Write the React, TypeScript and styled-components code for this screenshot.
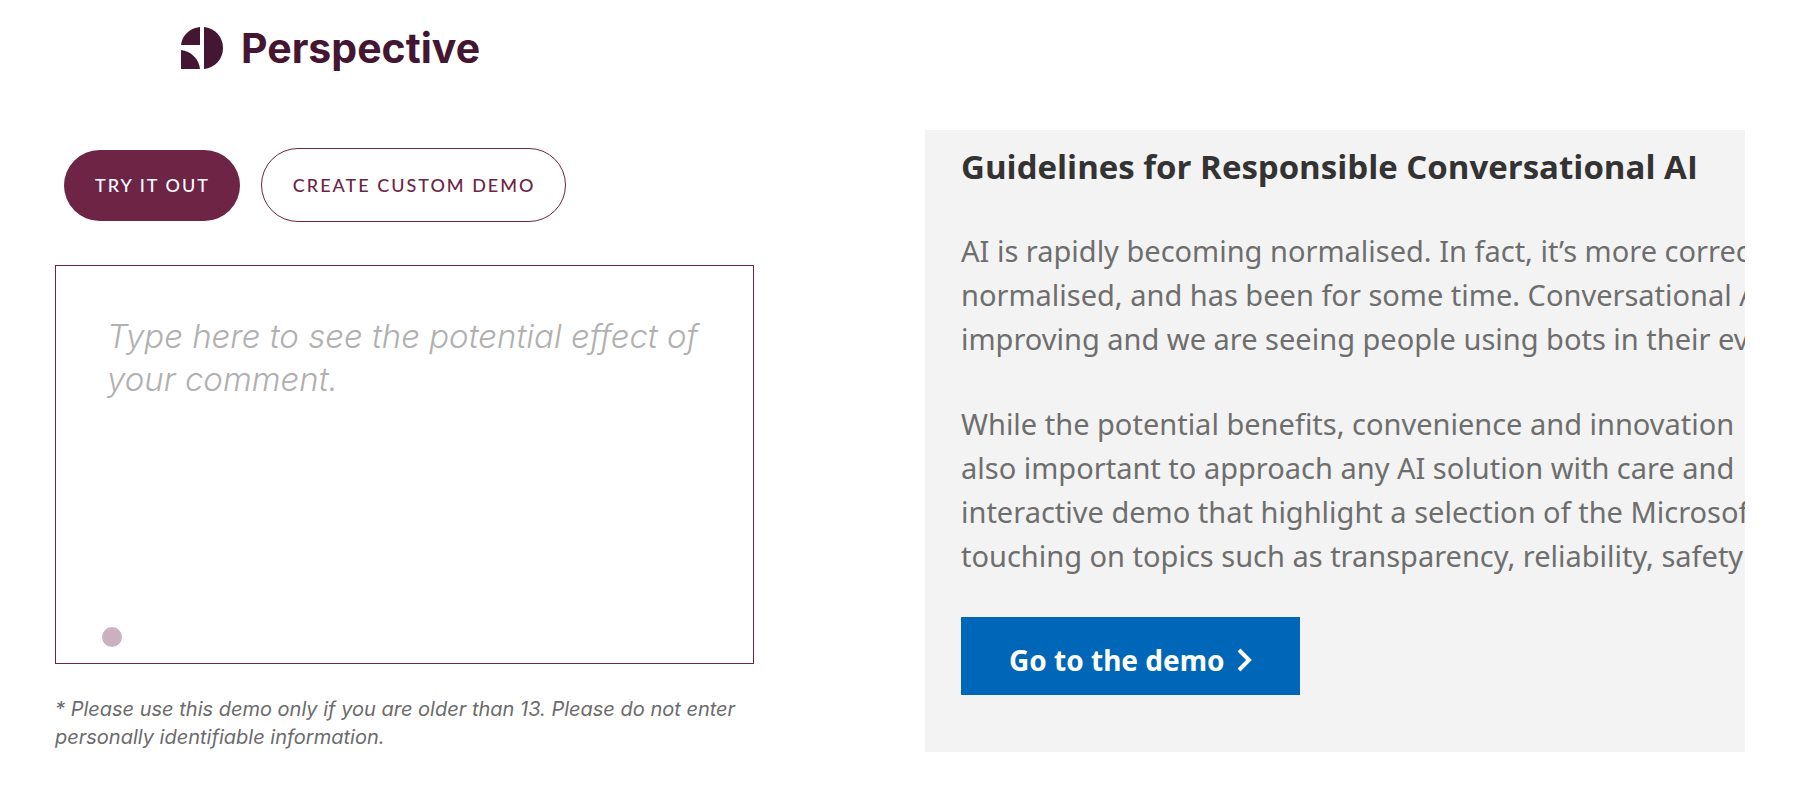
import React from "react";
import styled, { createGlobalStyle } from "styled-components";

const GlobalStyle = createGlobalStyle`
  *, *::before, *::after {
    box-sizing: border-box;
  }
  body {
    margin: 0;
    background: #ffffff;
  }
`;

const plum = "#6d2445";
const darkPlum = "#451632";

const Page = styled.main`
  display: grid;
  grid-template-columns: 699fr 820fr;
  column-gap: 171px;
  align-items: start;
  padding: 20px 63px 56px 55px;
`;

const DemoColumn = styled.section`
  min-width: 0;
`;

const Brand = styled.div`
  display: flex;
  align-items: center;
  gap: 18px;
  height: 56px;
  padding-left: 126px;
`;

const BrandMark = styled.svg`
  display: block;
  width: 42px;
  height: 42px;
  fill: ${darkPlum};
`;

const BrandName = styled.span`
  font: 700 41px/56px Inter, sans-serif;
  color: ${darkPlum};
`;

const Actions = styled.div`
  display: flex;
  align-items: center;
  gap: 21px;
  margin-top: 72px;
  padding-left: 9px;
`;

const PillButton = styled.button<{ $filled?: boolean }>`
  height: ${(p) => (p.$filled ? 71 : 74)}px;
  padding: 0 30px 0 31px;
  border: ${(p) => (p.$filled ? "none" : `1px solid ${plum}`)};
  border-radius: 37px;
  background: ${(p) => (p.$filled ? plum : "transparent")};
  color: ${(p) => (p.$filled ? "#ffffff" : plum)};
  font: 500 18px/24px Lato, sans-serif;
  letter-spacing: 2px;
  white-space: nowrap;
  cursor: pointer;
`;

const CommentBox = styled.div`
  display: flex;
  flex-direction: column;
  margin-top: 43px;
  height: 399px;
  padding: 49px 40px 16px 46px;
  border: 1px solid ${plum};
`;

const CommentInput = styled.textarea`
  flex: 1;
  width: 100%;
  padding: 0 0 0 5px;
  border: none;
  outline: none;
  resize: none;
  background: transparent;
  color: #333333;
  font: italic 300 33px/43px Inter, sans-serif;

  &::placeholder {
    color: #b0b0b0;
    opacity: 1;
  }
`;

const StatusDot = styled.span`
  width: 20px;
  height: 20px;
  border-radius: 50%;
  background: #cbb0c0;
`;

const Disclaimer = styled.p`
  margin: 31px 0 0;
  color: #6b6b6b;
  font: italic 400 20px/28px Inter, sans-serif;
`;

const Panel = styled.article`
  min-width: 0;
  margin-top: 110px;
  padding: 16px 0 57px 36px;
  overflow: hidden;
  background: #f3f3f3;
  font-family: "Noto Sans", sans-serif;
`;

const PanelTitle = styled.h2`
  margin: 0;
  color: #333333;
  font: 700 33px/42px "Open Sans", sans-serif;
  white-space: nowrap;
`;

const Paragraph = styled.p<{ $gap: number }>`
  margin: ${(p) => p.$gap}px 0 0;
  color: #6e6e6e;
  font-size: 29px;
  line-height: 44px;
  white-space: nowrap;
`;

const DemoLink = styled.a`
  display: inline-flex;
  align-items: center;
  gap: 12px;
  height: 78px;
  margin-top: 39px;
  padding: 8px 48px 0;
  background: #0067b8;
  color: #ffffff;
  font-size: 28px;
  font-weight: 700;
  line-height: 40px;
  text-decoration: none;
`;

const Chevron = styled.svg`
  width: 15px;
  height: 24px;
  fill: none;
  stroke: currentColor;
  stroke-width: 4;
`;

export default function App() {
  return (
    <>
      <GlobalStyle />
      <Page>
        <DemoColumn>
          <Brand>
            <BrandMark viewBox="0 0 42 42" aria-hidden="true">
              <path d="M19 0V18H0C1 8 9 1 19 0Z" />
              <path d="M23 0C34 1 42 10 42 21S34 41 23 42Z" />
              <path d="M0 23C10 24 18 32 19 42H0Z" />
            </BrandMark>
            <BrandName>Perspective</BrandName>
          </Brand>
          <Actions>
            <PillButton type="button" $filled>TRY IT OUT</PillButton>
            <PillButton type="button">CREATE CUSTOM DEMO</PillButton>
          </Actions>
          <CommentBox>
            <CommentInput
              aria-label="Comment"
              placeholder="Type here to see the potential effect of your comment."
            />
            <StatusDot />
          </CommentBox>
          <Disclaimer>
            * Please use this demo only if you are older than 13. Please do not enter personally
            identifiable information.
          </Disclaimer>
        </DemoColumn>
        <Panel>
          <PanelTitle>Guidelines for Responsible Conversational AI</PanelTitle>
          <Paragraph $gap={41}>
            AI is rapidly becoming normalised. In fact, it’s more correct
            <br />
            normalised, and has been for some time. Conversational AI
            <br />
            improving and we are seeing people using bots in their every
          </Paragraph>
          <Paragraph $gap={41}>
            While the potential benefits, convenience and innovation
            <br />
            also important to approach any AI solution with care and
            <br />
            interactive demo that highlight a selection of the Microsoft
            <br />
            touching on topics such as transparency, reliability, safety
          </Paragraph>
          <DemoLink href="#demo">
            Go to the demo
            <Chevron viewBox="0 0 15 24" aria-hidden="true">
              <path d="M2 2L12 12L2 22" />
            </Chevron>
          </DemoLink>
        </Panel>
      </Page>
    </>
  );
}
